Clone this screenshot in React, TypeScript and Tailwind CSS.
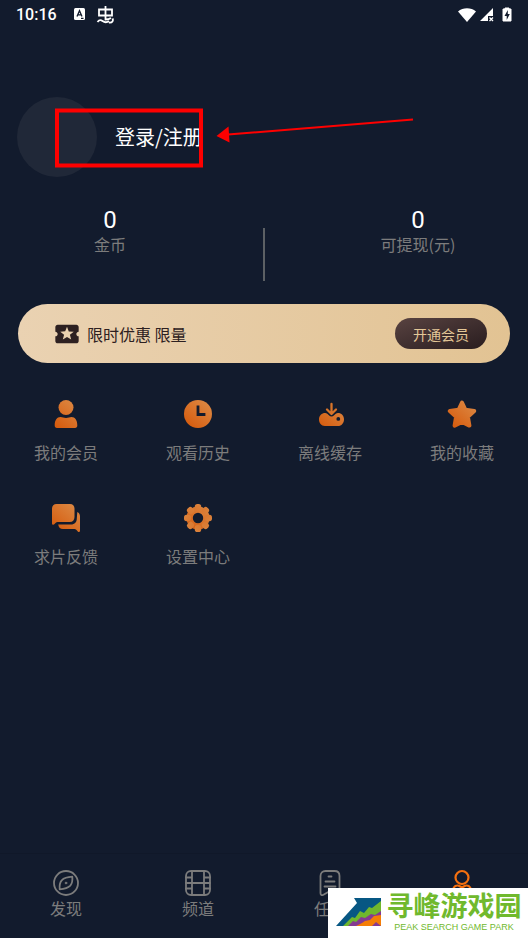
import type { ReactNode } from "react";
import { MdLocalActivity } from "react-icons/md";

const ORANGE = "url(#orange)";

function Gradients() {
  return (
    <svg className="absolute h-0 w-0" aria-hidden="true">
      <defs>
        <linearGradient id="orange" gradientUnits="userSpaceOnUse" x1="4" y1="28" x2="26" y2="2">
          <stop offset="0" stopColor="#d65a0c" />
          <stop offset="1" stopColor="#dc8a45" />
        </linearGradient>
      </defs>
    </svg>
  );
}

function MenuIcon({ children }: { children: ReactNode }) {
  return (
    <svg viewBox="0 0 30 30" className="h-[30px] w-[30px]" fill={ORANGE} aria-hidden="true">
      {children}
    </svg>
  );
}

function TabIcon({ children }: { children: ReactNode }) {
  return (
    <svg
      viewBox="0 0 28 28"
      className="h-7 w-7"
      fill="none"
      stroke="currentColor"
      strokeWidth="1.8"
      strokeLinecap="round"
      strokeLinejoin="round"
      aria-hidden="true"
    >
      {children}
    </svg>
  );
}

const menu = [
  {
    label: "我的会员",
    icon: (
      <>
        <circle cx="15" cy="8.5" r="7.5" />
        <path d="M3.7 26.5C3.7 21 6 18 9.5 18c2 0 3 1 5.5 1s3.500-1 5.500-1c3.500 0 5.800 3 5.800 8.500 0 1.600-.8 2.500-2.300 2.500H6c-1.500 0-2.300-.9-2.300-2.500Z" />
      </>
    ),
  },
  {
    label: "观看历史",
    icon: (
      <>
        <circle cx="15" cy="15" r="14" />
        <path d="M15 8v7.500h6" fill="none" stroke="#121b2d" strokeWidth="2.800" strokeLinecap="square" />
      </>
    ),
  },
  {
    label: "离线缓存",
    icon: (
      <>
        <path d="M16.500 5v9M12 10.500l4.500 4.500 4.500-4.500" fill="none" stroke="#d87429" strokeWidth="2.300" strokeLinecap="round" strokeLinejoin="round" />
        <path
          fillRule="evenodd"
          d="M10.200 14c1.600 0 2.600 1 3.700 2.300 1.500 1.700 3.700 1.700 5.200 0C20.200 15 21.400 14 23 14c3.400 0 6 2.600 6 6.200 0 3.900-2.400 6.800-6 6.800H9.800C6.300 27 4 24.200 4 20.300 4 16.700 6.800 14 10.200 14Zm13.100 4a1.900 1.900 0 1 0 0 3.800 1.900 1.900 0 0 0 0-3.800Z"
        />
      </>
    ),
  },
  {
    label: "我的收藏",
    icon: (
      <path
        d="M15 3.600l3.400 7.200 8.800 1.200-6.300 5.800 1.500 8.800-7.400-3.600-7.400 3.600 1.500-8.800-6.300-5.800 8.800-1.200Z"
        stroke={ORANGE}
        strokeWidth="4"
        strokeLinejoin="round"
      />
    ),
  },
  {
    label: "求片反馈",
    icon: (
      <>
        <path d="M5.500 1H19c2.800 0 4.500 1.800 4.500 4.500v8.500c0 3-1.800 5-4.800 5H6.500c-1.400 0-2.200 1-3.200 2.300-.8.900-2.300.5-2.300-.8V5.500C1 2.800 2.800 1 5.500 1Z" />
        <path d="M26.300 9c1.800.6 2.700 2.300 2.700 4.500v14c0 1.600-1.200 1.900-2.200.9-1.100-1.200-2-2.400-3.300-2.400H12c-2.800 0-4.300-1.500-4.800-4.500h12.600c4 0 6-2.500 6-6Z" />
      </>
    ),
  },
  {
    label: "设置中心",
    icon: (
      <>
        <circle cx="15" cy="15" r="8.400" fill="none" stroke={ORANGE} strokeWidth="6.400" />
        {[0, 45, 90, 135, 180, 225, 270, 315].map((angle) => (
          <rect key={angle} x="11.800" y="1" width="6.400" height="7" rx="2.600" transform={`rotate(${angle} 15 15)`} />
        ))}
      </>
    ),
  },
];

// the profile tab is icon only
const tabs = [
  {
    id: "discover",
    label: "发现",
    icon: (
      <>
        <circle cx="14" cy="14" r="12" />
        <path d="M20.300 7.700c.4 3.900-.3 7-2 9-2 2-5.800 3.300-10.600 3.600-.4-3.900.3-7 2-9 2-2 5.800-3.300 10.600-3.600Z" />
        <circle cx="14" cy="14" r="1" fill="currentColor" strokeWidth="0.500" />
      </>
    ),
  },
  {
    id: "channel",
    label: "频道",
    icon: (
      <>
        <rect x="2" y="2" width="24" height="24" rx="5" />
        <path d="M8 2v24M20 2v24M8 14h12M2 8.500h6M2 14h6M2 19.500h6M20 8.500h6M20 14h6M20 19.500h6" />
      </>
    ),
  },
  {
    id: "tasks",
    label: "任务",
    icon: (
      <>
        <path d="M4.500 24V7c0-3 2-5 5-5h9c3 0 5 2 5 5v19l-9.500-4-7 4c-1.500.6-2.500-.3-2.500-2Z" />
        <path d="M12.500 7.500h3M9.500 12.500h9M8.500 17.500h11" />
      </>
    ),
  },
  {
    id: "mine",
    icon: (
      <g strokeWidth="2.200">
        <circle cx="14" cy="8.500" r="6.500" />
        <path d="M4.500 25c0-6 2-8.500 5-8.500 2 0 2.500 1.500 4.500 1.500s2.500-1.500 4.500-1.500c3 0 5 2.500 5 8.500Z" />
      </g>
    ),
  },
];

function StatusBar() {
  return (
    <header className="flex h-[29px] items-center justify-between px-4 text-white">
      <div className="flex items-center">
        <time className="font-[Roboto,sans-serif] text-base font-medium">10:16</time>
        <svg viewBox="0 0 12 13" className="ml-[17px] h-[13px] w-3" aria-hidden="true">
          <rect width="11" height="12" rx="1.500" fill="#fff" />
          <path d="M3 8.500 5.500 2.700 8 8.500M4 6.800h3M7 10.300h2.500" fill="none" stroke="#121b2d" strokeWidth="1.300" />
        </svg>
        <svg viewBox="0 0 18 19" className="ml-2.5 h-[19px] w-[18px]" fill="none" stroke="#fff" strokeWidth="1.800" aria-hidden="true">
          <path d="M3 4.500h13v6H3ZM9.500 1v14.500M1.500 17c1.500-2 3-2.500 5-1s4 2 6.500 0M9.500 14.500c2.500 0 4-.5 5.500-1.500M13 17.500c3.500.5 4.500-2 3.500-4" />
        </svg>
      </div>
      <div className="flex items-center">
        <svg viewBox="0 0 18 14" className="h-3.5 w-[18px]" fill="#fff" aria-hidden="true">
          <path d="M9 14 0 3.500C5-.8 13-.8 18 3.500Z" />
        </svg>
        <svg viewBox="0 0 14 14" className="ml-1 h-3.5 w-3.5" fill="#fff" aria-hidden="true">
          <path d="M13 0v8H8v5H0Z" />
          <path d="m9.500 9.500 3.500 3.500M13 9.500 9.500 13" stroke="#fff" strokeWidth="1.300" />
        </svg>
        <svg viewBox="0 0 10 16" className="ml-2 h-4 w-2.5" aria-hidden="true">
          <path d="M3 1h4v1h2V14H1V2h2Z" fill="#fff" stroke="#fff" strokeLinejoin="round" />
          <path d="M5.800 3 2.500 9h2.200v4L7.800 7H5.800Z" fill="#121b2d" />
        </svg>
      </div>
    </header>
  );
}

function Profile() {
  return (
    <section className="relative mt-[68px] flex h-20 items-center px-[17px]">
      <div className="h-20 w-20 rounded-full bg-[#202838]" />
      <a href="#login" className="ml-[18px] text-xl text-white">
        登录/注册
      </a>
      <svg viewBox="0 0 370 72" className="absolute top-[10px] left-[50px] h-[72px] w-[370px]" aria-hidden="true">
        <rect x="7" y="3.500" width="144" height="55" fill="none" stroke="#fe0000" strokeWidth="4" />
        <path d="M178 27.500 363 12.500" stroke="#fe0000" strokeWidth="2" />
        <path d="m166.500 29 12-9.500 1 16Z" fill="#fe0000" />
      </svg>
    </section>
  );
}

function Stat({ value, label }: { value: number; label: string }) {
  return (
    <div className="w-[184px] text-center">
      <dd className="font-[Roboto,'Noto_Sans_CJK_SC',sans-serif] text-2xl leading-7 text-white">{value}</dd>
      <dt className="text-base leading-5 text-[#7c7c7c]">{label}</dt>
    </div>
  );
}

function Watermark() {
  return (
    <div className="absolute right-0 bottom-0 flex h-[50px] w-[200px] items-start bg-white pr-0.5 pl-2">
      <svg viewBox="0 0 46 30" className="mt-[9px] h-[30px] w-[46px]" aria-hidden="true">
        <path d="M0 29 21 6l-3-5h27v28Z" fill="#075783" />
        <path d="m7 29 9-9 3 1 5-7 4 2 5-6 3 1 9-7v25Z" fill="#70b72d" />
        <path d="m12 29 5-5 3 1 5-5 4 1 6-4 4 1 6-4v15Z" fill="#853a92" />
        <path d="m20 29 6-3 3-2 5-1 4-4 7-1v11l-5-4-4 4Z" fill="#f57e06" />
      </svg>
      <div className="flex-1 pt-0.5 text-center text-[#70b92d]">
        <p className="text-[27px] leading-[30px] font-bold">寻峰游戏园</p>
        <p className="font-['Liberation_Sans',sans-serif] text-[9px] leading-[14px]">PEAK SEARCH GAME PARK</p>
      </div>
    </div>
  );
}

export default function App() {
  return (
    <div className="relative flex min-h-screen flex-col overflow-hidden bg-[#121b2d] font-['Noto_Sans_CJK_SC',sans-serif]">
      <Gradients />
      <StatusBar />
      <main className="flex-1">
        <Profile />

        <dl className="mt-[29px] flex h-[75px] justify-between px-[18px]">
          <Stat value={0} label="金币" />
          <div className="h-[53px] w-0.5 self-end bg-[#5c6064]" />
          <Stat value={0} label="可提现(元)" />
        </dl>

        <section className="mx-[18px] mt-[23px] flex h-[59px] items-center justify-between rounded-full bg-linear-to-r from-[#ead2b2] to-[#e2c393] pr-[23px] pl-[35px]">
          <div className="flex items-center gap-1.5 text-[#2d2021]">
            <MdLocalActivity className="h-7 w-7" />
            <span>限时优惠 限量</span>
          </div>
          <button
            type="button"
            className="h-[31px] rounded-full bg-linear-to-br from-[#594341] to-[#291d1f] px-[18px] text-sm text-[#e4c797]"
          >
            开通会员
          </button>
        </section>

        <section className="mt-9 grid grid-cols-4 gap-y-[38px]">
          {menu.map(({ label, icon }) => (
            <button key={label} type="button" className="flex flex-col items-center gap-2.5 text-base text-[#7c7c7c]">
              <MenuIcon>{icon}</MenuIcon>
              <span className="leading-[26px]">{label}</span>
            </button>
          ))}
        </section>
      </main>

      <nav className="grid h-[85px] grid-cols-4 border-t border-[#101829] pt-[15px]">
        {tabs.map(({ id, label, icon }) => (
          <a
            key={id}
            href={`#${id}`}
            aria-label={label ?? id}
            className={`flex flex-col items-center text-base leading-[22px] ${label ? "text-[#7c7c7c]" : "text-[#f5700f]"}`}
          >
            <TabIcon>{icon}</TabIcon>
            {label}
          </a>
        ))}
      </nav>
      <Watermark />
    </div>
  );
}
